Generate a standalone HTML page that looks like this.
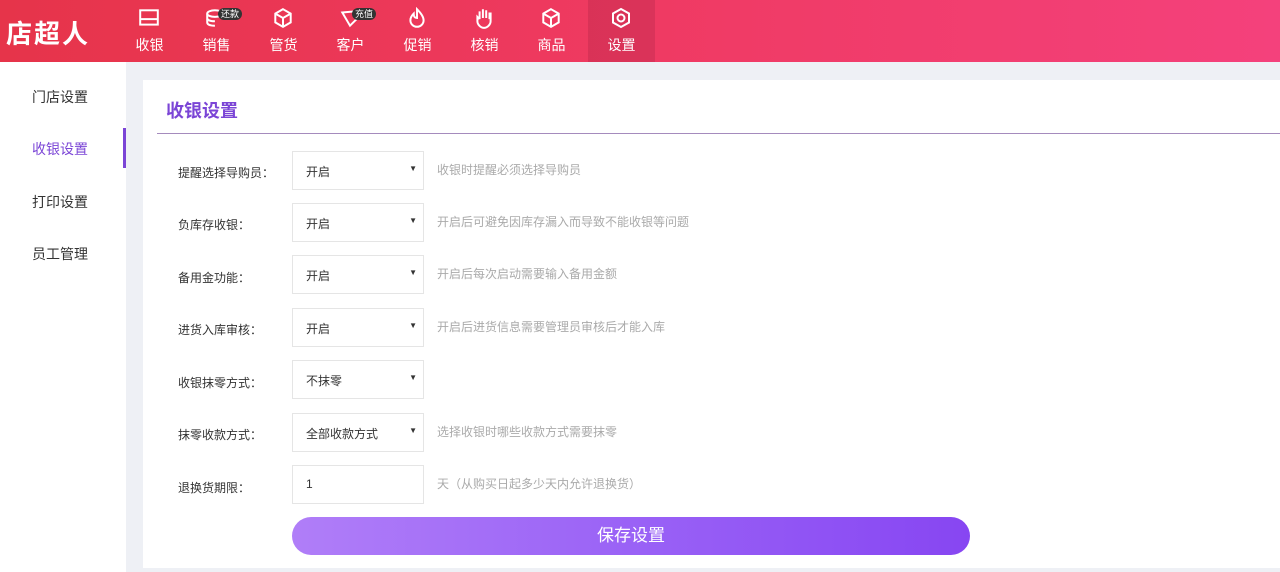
<!DOCTYPE html>
<html><head><meta charset="utf-8"><style>
*{margin:0;padding:0;box-sizing:border-box}
body{width:1280px;height:572px;overflow:hidden;font-family:"Liberation Sans","Noto Sans CJK SC",sans-serif;background:#eef0f5;position:relative}
.hd{position:absolute;left:0;top:0;width:1280px;height:62px;background:linear-gradient(90deg,#e6344a,#ef3a62 50%,#f4417c)}
.logo{position:absolute;left:6px;top:14px;color:#fff;font-size:26px;font-weight:bold;letter-spacing:2px}
.nav{position:absolute;top:0;width:67px;height:62px;color:#fff;text-align:center;font-size:14px}
.nav svg{position:absolute;left:22px;top:7px}
.nav span{position:absolute;left:0;right:0;top:35px}
.nav.act{background:rgba(120,20,50,.18)}
.badge{position:absolute;top:8px;left:35px;background:#333;color:#fff;font-size:9px;border-radius:7px;padding:0 3px;line-height:12px}
.side{position:absolute;left:0;top:62px;width:126px;height:510px;background:#fff}
.side div{position:absolute;left:32px;font-size:14px;color:#333}
.side .on{color:#7b45d6}
.bar{position:absolute;left:123px;top:128px;width:3px;height:40px;background:#7b45d6}
.card{position:absolute;left:143px;top:80px;width:1137px;height:488px;background:#fff}
.title{position:absolute;left:166px;top:97px;font-size:18px;color:#7b45d6;font-weight:bold}
.line{position:absolute;left:157px;top:133px;width:1123px;height:1px;background:#a58bbd}
.lb{position:absolute;left:178px;font-size:12px;color:#333}
.sel{position:absolute;left:292px;width:132px;height:39px;border:1px solid #e5e5e5;background:#fff;font-size:12px;color:#333;padding:11px 0 0 13px}
.sel:after{content:"▼";position:absolute;right:6px;top:12px;font-size:8px}
.in:after{content:none}
.hint{position:absolute;left:437px;font-size:12px;color:#aaa}
.btn{position:absolute;left:292px;top:517px;width:678px;height:38px;border-radius:19px;background:linear-gradient(90deg,#b07ef8,#9a62f6 50%,#8746f2);color:#fff;font-size:17px;text-align:center;line-height:38px}
</style></head><body>
<div class="hd">
<div class="logo">店超人</div>
<div class="nav" style="left:116px"><svg width="22" height="22" viewBox="0 0 20 20" fill="none" stroke="#fff" stroke-width="1.8"><rect x="2" y="3" width="16" height="13"/><line x1="2" y1="11" x2="18" y2="11"/></svg><span>收银</span></div>
<div class="nav" style="left:183px"><svg width="22" height="22" viewBox="0 0 20 20" fill="none" stroke="#fff" stroke-width="1.8"><ellipse cx="9" cy="6" rx="7" ry="3"/><path d="M2 6v8c0 2 3 3 7 3M2 10c0 2 3 3 7 3"/></svg><div class="badge">还款</div><span>销售</span></div>
<div class="nav" style="left:250px"><svg width="22" height="22" viewBox="0 0 20 20" fill="none" stroke="#fff" stroke-width="1.8"><path d="M10 2l7 4v8l-7 4-7-4V6z M3 6l7 4 7-4 M10 10v8"/></svg><span>管货</span></div>
<div class="nav" style="left:317px"><svg width="22" height="22" viewBox="0 0 20 20" fill="none" stroke="#fff" stroke-width="1.8"><path d="M3 5l7 12 8-8-4-5z"/></svg><div class="badge">充值</div><span>客户</span></div>
<div class="nav" style="left:384px"><svg width="22" height="22" viewBox="0 0 20 20" fill="none" stroke="#fff" stroke-width="1.8"><path d="M10 2c4 4 6 7 6 10a6 6 0 0 1-12 0c0-3 2-5 3-6 0 3 1 4 3 4z"/></svg><span>促销</span></div>
<div class="nav" style="left:451px"><svg width="22" height="22" viewBox="0 0 20 20" fill="none" stroke="#fff" stroke-width="1.8"><path d="M6 11V4m3 6V2m3 8V3m3 8V5M6 11l-2-2v4c0 3 3 6 6 6s6-3 6-6V5"/></svg><span>核销</span></div>
<div class="nav" style="left:518px"><svg width="22" height="22" viewBox="0 0 20 20" fill="none" stroke="#fff" stroke-width="1.8"><path d="M10 2l7 4v8l-7 4-7-4V6z M3 6l7 4 7-4 M10 10v8"/></svg><span>商品</span></div>
<div class="nav act" style="left:588px"><svg width="22" height="22" viewBox="0 0 22 22" fill="none" stroke="#fff" stroke-width="2"><path d="M11 2l8 4.5v9L11 20l-8-4.5v-9z"/><circle cx="11" cy="11" r="3.5"/></svg><span>设置</span></div>
</div>
<div class="side">
<div style="top:25px">门店设置</div>
<div class="on" style="top:77px">收银设置</div>
<div style="top:130px">打印设置</div>
<div style="top:182px">员工管理</div>
</div>
<div class="bar"></div>
<div class="card"></div>
<div class="title">收银设置</div>
<div class="line"></div>

<div class="lb" style="top:164px">提醒选择导购员：</div><div class="sel" style="top:151px">开启</div><div class="hint" style="top:161px">收银时提醒必须选择导购员</div>
<div class="lb" style="top:216px">负库存收银：</div><div class="sel" style="top:203px">开启</div><div class="hint" style="top:213px">开启后可避免因库存漏入而导致不能收银等问题</div>
<div class="lb" style="top:269px">备用金功能：</div><div class="sel" style="top:255px">开启</div><div class="hint" style="top:265px">开启后每次启动需要输入备用金额</div>
<div class="lb" style="top:321px">进货入库审核：</div><div class="sel" style="top:308px">开启</div><div class="hint" style="top:318px">开启后进货信息需要管理员审核后才能入库</div>
<div class="lb" style="top:374px">收银抹零方式：</div><div class="sel" style="top:360px">不抹零</div>
<div class="lb" style="top:426px">抹零收款方式：</div><div class="sel" style="top:413px">全部收款方式</div><div class="hint" style="top:423px">选择收银时哪些收款方式需要抹零</div>
<div class="lb" style="top:479px">退换货期限：</div><div class="sel in" style="top:465px">1</div><div class="hint" style="top:475px">天（从购买日起多少天内允许退换货）</div>
<div class="btn">保存设置</div>
</body></html>
